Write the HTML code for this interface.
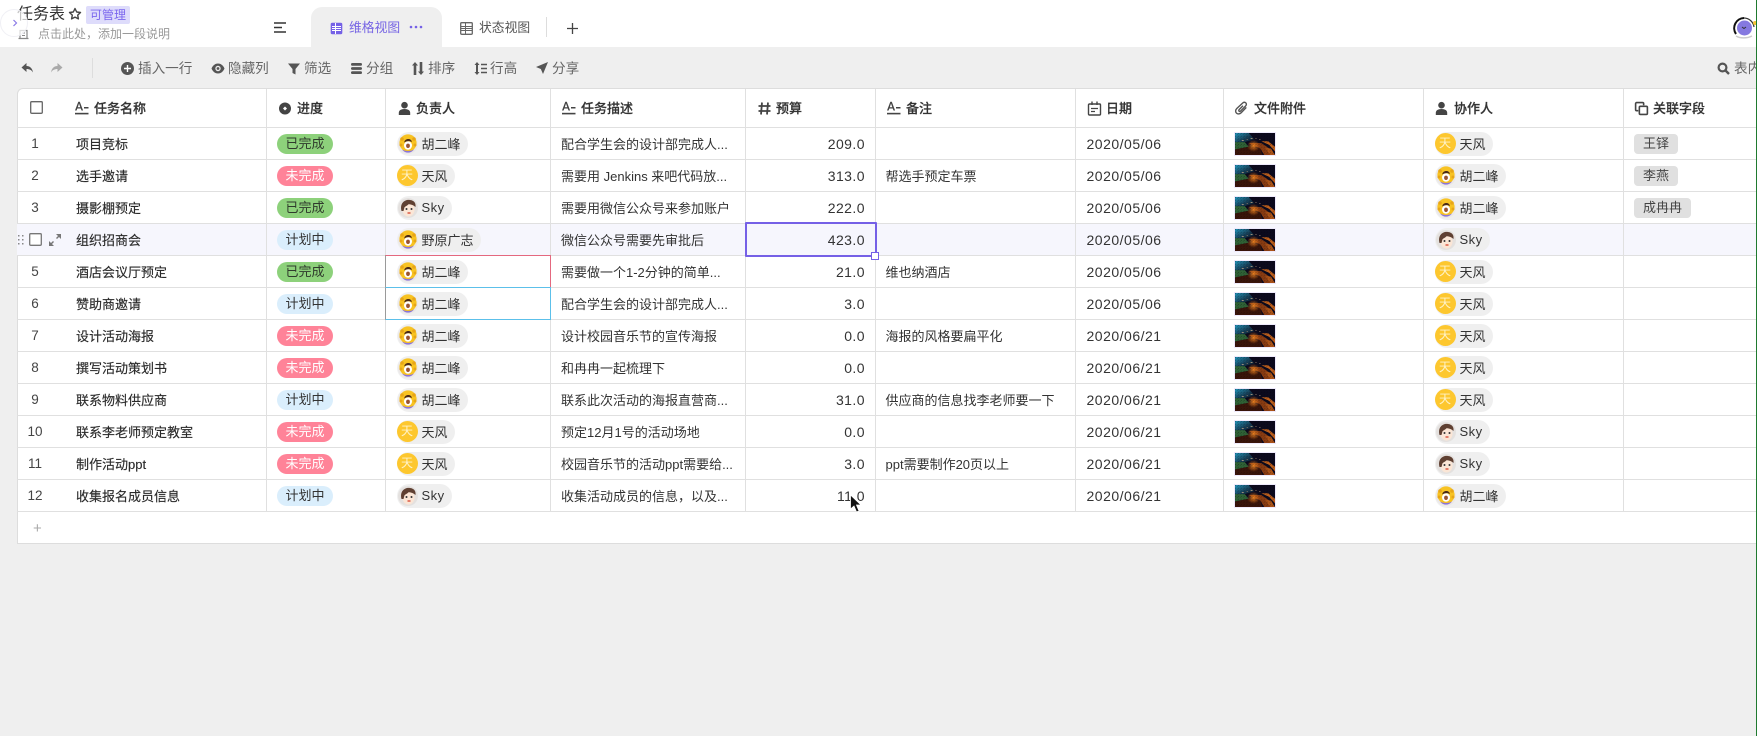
<!DOCTYPE html>
<html lang="zh"><head><meta charset="utf-8"><title>任务表</title>
<style>
*{box-sizing:border-box}
html,body{margin:0;padding:0}
body{width:1757px;height:736px;overflow:hidden;position:relative;background:#efefef;color:#333;font-family:"Liberation Sans","Noto Sans CJK SC",sans-serif;font-size:13px}
.top{position:absolute;left:0;top:0;width:1757px;height:47px;background:#fff}
.abs{position:absolute;white-space:nowrap}
.tb{position:absolute;top:60px;line-height:18px;font-size:13.6px;color:#666;white-space:nowrap}
.ic{position:absolute;display:block}
.t{position:absolute;left:17px;top:88px;width:1740px;height:456px;background:#fff;border-left:1px solid #ddd;border-top:1px solid #ddd;border-bottom:1px solid #ddd;border-top-left-radius:6px}
.r{display:flex;height:32px;border-bottom:1px solid #e0e0e0;margin-left:-1px}
.r.h{height:39px;font-weight:500;color:#333}
.r.hov{background:#f6f6fd}
.c{position:relative;height:100%;border-right:1px solid #e0e0e0;display:flex;align-items:center;white-space:nowrap;flex:none}
.c1{width:250px}.c2{width:119px;padding-left:10px}.c3{width:165px;padding-left:10.5px}.c4{width:195px;padding-left:10px;color:#333}
.c5{width:130px;padding-right:10px;justify-content:flex-end;font-size:14px;letter-spacing:.45px}.c6{width:200px;padding-left:9.500px}.c7{width:148px;padding-left:10.5px;font-size:14px;letter-spacing:.5px}
.c8{width:200px;padding-left:10px}.c9{width:200px;padding-left:10.5px}.c10{width:133px;border-right:0;padding-left:10px}
.n{position:absolute;left:0;width:36px;text-align:center;font-size:13.5px;color:#444}
.nm{position:absolute;left:59px;color:#2a2a2a;-webkit-text-stroke:.15px #2a2a2a}
.p{display:inline-block;width:56px;height:20px;line-height:20px;border-radius:10px;text-align:center;font-size:13px}
.g{background:#8dd17b;color:#2f3a2c}.k{background:#ff8398;color:#fff}.b{background:#daeefc;color:#333}
.u{display:flex;align-items:center;height:24px;border-radius:12px;background:#efefef;padding:0 7.5px 0 1px;font-size:13px;color:#333;letter-spacing:0}
.u svg{width:20px;height:20px;margin-right:4px;flex:none}
.u.y{padding-left:0}
.u .ya{width:21px;height:21px;border-radius:50%;background:#fdc72e;color:#fff3c8;text-align:center;line-height:21px;font-size:12px;margin:0 4px 0 0;flex:none}
.th{display:block;width:42px;height:24px;border:1px solid #eeeafc}
.tg{display:inline-block;height:20px;line-height:20px;border-radius:4px;background:#e0e0e0;padding:0 9px;font-size:13px;color:#444}
.hd svg{position:absolute;top:12px;width:15px;height:15px;color:#444}
.hd span{position:absolute;top:11px;line-height:18px;-webkit-text-stroke:.2px #333}
</style></head><body>
<svg width="0" height="0" style="position:absolute">
<defs>
<linearGradient id="gr1" x1="0" y1="0" x2="1" y2="1"><stop offset="0" stop-color="#2296bb"/><stop offset=".5" stop-color="#174058"/><stop offset="1" stop-color="#0a0818"/></linearGradient>
<radialGradient id="gr2" cx=".5" cy=".5" r=".5"><stop offset="0" stop-color="#f08420"/><stop offset="1" stop-color="#e8781c" stop-opacity="0"/></radialGradient>
<pattern id="spk" width="3" height="3" patternUnits="userSpaceOnUse"><rect width="1" height="1" fill="#000" fill-opacity=".3"/><rect x="2" y="1" width="1" height="1" fill="#000" fill-opacity=".2"/></pattern>
<symbol id="thumb" viewBox="0 0 41 24" preserveAspectRatio="none">
<rect width="41" height="24" fill="#0c0a1e"/>
<path d="M0 0H14L20 7 6 11 0 13Z" fill="url(#gr1)"/>
<path d="M0 10L10 10 14 15 0 18Z" fill="#2f6236"/>
<path d="M0 18L14 15 26 17 28 24H0Z" fill="#3a150a"/>
<path d="M14 11L27 11 34 16 39 24H30L26 17Z" fill="#8a3c12"/>
<path d="M27 9L35 13 41 20V15L34 9Z" fill="#bd5f1c"/>
<path d="M31 16L36 24H41L37 17Z" fill="#ad5418"/>
<circle cx="19" cy="14" r="6.500" fill="url(#gr2)"/>
<path d="M7 8h2M12 7h1M16 6h2M21 6h1M25 7h1" stroke="#c8aa88" stroke-width=".8"/>
<rect width="41" height="24" fill="url(#spk)"/>
</symbol>
<symbol id="sun" viewBox="0 0 20 20">
<circle cx="10" cy="10" r="10" fill="#ebe8e8"/>
<circle cx="10" cy="9" r="8.600" fill="#f8c322"/>
<circle cx="4" cy="5" r="1.800" fill="#e8a616"/><circle cx="16" cy="5" r="1.800" fill="#e8a616"/><circle cx="3" cy="11" r="1.500" fill="#e8a616"/><circle cx="17" cy="11" r="1.500" fill="#e8a616"/>
<ellipse cx="10" cy="11.500" rx="4" ry="4.200" fill="#fff"/>
<ellipse cx="10" cy="11.800" rx="1.900" ry="2.200" fill="#9a5430"/>
<path d="M6.200 8.500c.3-4 6.800-5 7.800-.5-2.800-1.200-5-1.200-7.800.5Z" fill="#4a2a18"/>
<path d="M4 15.500c3 4.200 9 4.200 12 0-3 2-9 2-12 0Z" fill="#8b74d8"/>
</symbol>
<symbol id="sky" viewBox="0 0 20 20">
<circle cx="10" cy="10" r="10" fill="#e4e1df"/>
<ellipse cx="10.500" cy="11.500" rx="6" ry="7" fill="#fbe6d6"/>
<path d="M3.500 13C1.500 5 7 1.200 12 2c4.500.5 6 3.500 5.500 7-2-2-5-2.800-7-2.800-1 1.300-3 2-4 3L5.500 13Z" fill="#5f4032"/>
<circle cx="8.500" cy="11" r="1" fill="#333"/><circle cx="13.500" cy="11" r="1" fill="#333"/>
<path d="M9.500 15h3" stroke="#d8503c" stroke-width="1.400"/>
</symbol>
<symbol id="aicon" viewBox="0 0 15 15"><path d="M1 9.500L4.300.8h1.500l3.300 8.700H7.500L6.800 7.500H3.300L2.600 9.500ZM3.800 6.200h2.500L5 2.500Z" fill="currentColor"/><rect x="10" y="6" width="4.500" height="1.500" fill="currentColor"/><rect x="1" y="11.800" width="13.500" height="1.600" fill="currentColor"/></symbol>
<symbol id="person" viewBox="0 0 15 15"><circle cx="7.500" cy="4.200" r="3.300" fill="currentColor"/><path d="M1.800 14v-2.200c0-2.400 2.200-3.800 5.700-3.800s5.700 1.400 5.700 3.800V14Z" fill="currentColor"/></symbol>
</defs></svg>

<div class="top"></div>
<div class="abs" style="left:17px;top:4px;font-size:16px;line-height:22px;color:#333">任务表</div>
<svg class="ic" style="left:68px;top:7px" width="14" height="14" viewBox="0 0 14 14"><path d="M7 1.500l1.700 3.500 3.800.5-2.800 2.600.7 3.800L7 10.100l-3.400 1.800.7-3.800-2.800-2.600 3.800-.5Z" fill="none" stroke="#444" stroke-width="1.400" stroke-linejoin="round"/></svg>
<div class="abs" style="left:86px;top:6px;width:44px;height:18px;background:#dedcfb;border-radius:2px;color:#7b67ee;font-size:12px;line-height:18px;text-align:center">可管理</div>
<svg class="ic" style="left:17px;top:28px" width="13" height="13" viewBox="0 0 13 13"><path d="M3 2.500h7v8H3ZM1.500 10.500h10" fill="none" stroke="#888" stroke-width="1.200"/><path d="M5 5h3M5 7.500h3" stroke="#888"/></svg>
<div class="abs" style="left:38px;top:26px;font-size:12px;line-height:17px;color:#999">点击此处，添加一段说明</div>
<svg class="ic" style="left:0;top:9px" width="30" height="29" viewBox="0 0 30 29"><circle cx="14" cy="14" r="13.500" fill="#fff" fill-opacity=".7" stroke="#f0f0f5"/><path d="M13.500 11l3 3-3 3" fill="none" stroke="#8a7ae6" stroke-width="1.200"/></svg>

<svg class="ic" style="left:274px;top:22px" width="13" height="12" viewBox="0 0 13 12"><path d="M0 1h12M0 5.500h8M0 10h12" stroke="#333" stroke-width="1.600"/></svg>
<div class="abs" style="left:311px;top:7px;width:131px;height:40px;background:#efefef;border-radius:11px 11px 0 0"></div>
<svg class="ic" style="left:330px;top:22px" width="13" height="13" viewBox="0 0 13 13"><rect x=".7" y=".7" width="11.600" height="11.600" rx="1.500" fill="#7561e6"/><path d="M2 4.500h9M2 6.500h9M2 8.500h9" stroke="#fff" stroke-width="1"/><path d="M5.500 1v11" stroke="#fff"/></svg>
<div class="abs" style="left:349px;top:19px;font-size:12.800px;line-height:18px;color:#7664e4">维格视图</div>
<svg class="ic" style="left:409px;top:25px" width="14" height="4" viewBox="0 0 14 4"><circle cx="2" cy="2" r="1.300" fill="#7561e6"/><circle cx="7" cy="2" r="1.300" fill="#7561e6"/><circle cx="12" cy="2" r="1.300" fill="#7561e6"/></svg>
<svg class="ic" style="left:460px;top:22px" width="13" height="13" viewBox="0 0 13 13"><rect x=".7" y=".7" width="11.600" height="11.600" rx="1" fill="none" stroke="#666" stroke-width="1.300"/><path d="M1 4.500h11M1 6.500h11M1 8.500h11M5.500 1v11" stroke="#666"/></svg>
<div class="abs" style="left:479px;top:19px;font-size:12.800px;line-height:18px;color:#555">状态视图</div>
<div class="abs" style="left:546px;top:17px;width:1px;height:20px;background:#ddd"></div>
<svg class="ic" style="left:567px;top:23px" width="11" height="11" viewBox="0 0 11 11"><path d="M5.500 0v11M0 5.500h11" stroke="#444" stroke-width="1.300"/></svg>

<svg class="ic" style="left:1733px;top:17px" width="23" height="23" viewBox="0 0 23 23"><path d="M11 1A10.200 10.200 0 0 0 3 17" fill="none" stroke="#111" stroke-width="2"/><path d="M11 1A10.200 10.200 0 0 1 21 10" fill="none" stroke="#333" stroke-width="1.200"/><circle cx="11.500" cy="11" r="7.500" fill="#8579e0"/><path d="M9 10l2 1.500L13 10" stroke="#333" fill="none"/><path d="M3 19c4 2.500 11 2.500 16 0" stroke="#ccc" stroke-width="1.500" fill="none"/><circle cx="22" cy="6" r="2" fill="#f4c33a"/></svg>

<!-- toolbar -->
<svg class="ic" style="left:21px;top:62px" width="13" height="12" viewBox="0 0 13 12"><path d="M5.500 1L.5 5.500l5 4.500V7c3 0 5 1 6.500 3.500C11.500 7 9.500 4 5.500 4Z" fill="#555"/></svg>
<svg class="ic" style="left:50px;top:62px" width="13" height="12" viewBox="0 0 13 12"><path d="M7.500 1l5 4.500-5 4.500V7c-3 0-5 1-6.500 3.500C1.500 7 3.500 4 7.500 4Z" fill="#aaa"/></svg>
<div class="abs" style="left:92px;top:58px;width:1px;height:20px;background:#ddd"></div>
<svg class="ic" style="left:121px;top:62px" width="13" height="13" viewBox="0 0 13 13"><circle cx="6.500" cy="6.500" r="6.500" fill="#555"/><path d="M6.500 3v7M3 6.500h7" stroke="#fff" stroke-width="1.400"/></svg><div class="tb" style="left:138px">插入一行</div>
<svg class="ic" style="left:211px;top:63px" width="14" height="11" viewBox="0 0 14 11"><path d="M.5 5.500C2 2 4.500.5 7 .5s5 1.500 6.500 5C12 9 9.500 10.500 7 10.500S2 9 .5 5.500Z" fill="#555"/><circle cx="7" cy="5.500" r="2.700" fill="#eee"/><circle cx="7" cy="5.500" r="1.400" fill="#555"/></svg><div class="tb" style="left:228px">隐藏列</div>
<svg class="ic" style="left:288px;top:63px" width="12" height="12" viewBox="0 0 12 12"><path d="M0 .5h12L7.500 6v5.500L4.500 10V6Z" fill="#555"/></svg><div class="tb" style="left:304px">筛选</div>
<svg class="ic" style="left:351px;top:63px" width="11" height="11" viewBox="0 0 11 11"><rect y="0" width="11" height="2.800" rx="1.400" fill="#555"/><rect y="4.100" width="11" height="2.800" rx="1.400" fill="#555"/><rect y="8.200" width="11" height="2.800" rx="1.400" fill="#555"/></svg><div class="tb" style="left:366px">分组</div>
<svg class="ic" style="left:411px;top:62px" width="14" height="13" viewBox="0 0 14 13"><path d="M4 0L7 3.500H5.300V13H2.700V3.500H1Z" fill="#555"/><path d="M10 13L7 9.500h1.700V0h2.600v9.500H13Z" fill="#555"/></svg><div class="tb" style="left:428px">排序</div>
<svg class="ic" style="left:474px;top:62px" width="13" height="13" viewBox="0 0 13 13"><path d="M3 0l2.500 3H4v7h1.500L3 13 .5 10H2V3H.5Z" fill="#555"/><path d="M7 2.500h6M7 6.500h6M7 10.500h6" stroke="#555" stroke-width="1.500"/></svg><div class="tb" style="left:490px">行高</div>
<svg class="ic" style="left:536px;top:62px" width="12" height="12" viewBox="0 0 12 12"><path d="M12 0L0 5l4.800 2L7 12Z" fill="#555"/></svg><div class="tb" style="left:552px">分享</div>
<svg class="ic" style="left:1717px;top:62px" width="13" height="13" viewBox="0 0 13 13"><circle cx="5.500" cy="5.500" r="3.900" fill="none" stroke="#555" stroke-width="2.200"/><path d="M8.500 8.500L12 12" stroke="#555" stroke-width="2.400"/></svg><div class="tb" style="left:1734px">表内</div>

<!-- table -->
<div class="t">
<div class="r h">
<div class="c c1 hd"><svg class="ic" style="left:13px;top:12px;width:13px;height:13px" viewBox="0 0 13 13"><rect x=".7" y=".7" width="11.600" height="11.600" rx="1" fill="none" stroke="#666" stroke-width="1.300"/></svg><svg style="left:57px"><use href="#aicon"/></svg><span style="left:77px">任务名称</span></div>
<div class="c c2 hd"><svg style="left:11px" viewBox="0 0 15 15"><circle cx="7" cy="7.500" r="6" fill="#444"/><path d="M7 5.500l2 2-2 2-2-2Z" fill="#fff"/></svg><span style="left:30px">进度</span></div>
<div class="c c3 hd"><svg style="left:11px"><use href="#person"/></svg><span style="left:30px">负责人</span></div>
<div class="c c4 hd"><svg style="left:10px"><use href="#aicon"/></svg><span style="left:30px">任务描述</span></div>
<div class="c c5 hd" style="font-size:13px;letter-spacing:0"><svg style="left:11px" viewBox="0 0 15 15"><path d="M5 1.500L4 13.500M11 1.500L10 13.500M1.500 5h12M1.500 10h12" stroke="#444" stroke-width="1.800" fill="none"/></svg><span style="left:30px">预算</span></div>
<div class="c c6 hd"><svg style="left:10px"><use href="#aicon"/></svg><span style="left:30px">备注</span></div>
<div class="c c7 hd" style="font-size:13px;letter-spacing:0"><svg style="left:11px" viewBox="0 0 15 15"><rect x="1.500" y="3" width="12" height="11" rx="1" fill="none" stroke="#444" stroke-width="1.400"/><path d="M5 .5v3.500M10 .5v3.500" stroke="#444" stroke-width="1.400"/><path d="M4 7.500h7M4 10.500h4" stroke="#444" stroke-width="1.300"/></svg><span style="left:30px">日期</span></div>
<div class="c c8 hd"><svg style="left:10px" viewBox="0 0 14 14"><path d="M11.500 6l-4.800 5c-1.400 1.400-3.300 1.400-4.400.3-1.100-1.100-1-3 .3-4.300L8 2c1-1 2.200-1 3-.2.800.8.700 2-.2 2.900L6.200 9.300c-.5.500-1.100.5-1.500.1-.4-.4-.3-1 .2-1.500l3.500-3.500" fill="none" stroke="#555" stroke-width="1.300"/></svg><span style="left:30px">文件附件</span></div>
<div class="c c9 hd"><svg style="left:10px"><use href="#person"/></svg><span style="left:30px">协作人</span></div>
<div class="c c10 hd"><svg style="left:10px" viewBox="0 0 14 14"><path d="M9 4V2.500a1 1 0 0 0-1-1H2.500a1 1 0 0 0-1 1V8a1 1 0 0 0 1 1H4" fill="none" stroke="#444" stroke-width="1.500"/><rect x="5" y="5" width="7.500" height="7.500" rx="1" fill="none" stroke="#444" stroke-width="1.500"/></svg><span style="left:29px">关联字段</span></div>
</div>

<div class="r"><div class="c c1"><span class="n">1</span><span class="nm">项目竞标</span></div><div class="c c2"><span class="p g">已完成</span></div><div class="c c3"><span class="u"><svg><use href="#sun"/></svg>胡二峰</span></div><div class="c c4">配合学生会的设计部完成人...</div><div class="c c5">209.0</div><div class="c c6"></div><div class="c c7">2020/05/06</div><div class="c c8"><svg class="th"><use href="#thumb"/></svg></div><div class="c c9"><span class="u y"><span class="ya">天</span>天风</span></div><div class="c c10"><span class="tg">王铎</span></div></div>

<div class="r"><div class="c c1"><span class="n">2</span><span class="nm">选手邀请</span></div><div class="c c2"><span class="p k">未完成</span></div><div class="c c3"><span class="u y"><span class="ya">天</span>天风</span></div><div class="c c4">需要用 Jenkins 来吧代码放...</div><div class="c c5">313.0</div><div class="c c6">帮选手预定车票</div><div class="c c7">2020/05/06</div><div class="c c8"><svg class="th"><use href="#thumb"/></svg></div><div class="c c9"><span class="u"><svg><use href="#sun"/></svg>胡二峰</span></div><div class="c c10"><span class="tg">李燕</span></div></div>

<div class="r"><div class="c c1"><span class="n">3</span><span class="nm">摄影棚预定</span></div><div class="c c2"><span class="p g">已完成</span></div><div class="c c3"><span class="u"><svg><use href="#sky"/></svg><span style="letter-spacing:.5px">Sky</span></span></div><div class="c c4">需要用微信公众号来参加账户</div><div class="c c5">222.0</div><div class="c c6"></div><div class="c c7">2020/05/06</div><div class="c c8"><svg class="th"><use href="#thumb"/></svg></div><div class="c c9"><span class="u"><svg><use href="#sun"/></svg>胡二峰</span></div><div class="c c10"><span class="tg">成冉冉</span></div></div>

<div class="r hov"><div class="c c1"><svg class="ic" style="left:1px;top:10px" width="7" height="11" viewBox="0 0 7 11"><g fill="#888"><rect x="0" y="1" width="1.500" height="1.500"/><rect x="4" y="1" width="1.500" height="1.500"/><rect x="0" y="5" width="1.500" height="1.500"/><rect x="4" y="5" width="1.500" height="1.500"/><rect x="0" y="9" width="1.500" height="1.500"/><rect x="4" y="9" width="1.500" height="1.500"/></g></svg><svg class="ic" style="left:12px;top:9px" width="13" height="13" viewBox="0 0 13 13"><rect x=".7" y=".7" width="11.600" height="11.600" rx="1" fill="#fff" stroke="#777" stroke-width="1.300"/></svg><svg class="ic" style="left:32px;top:10px" width="12" height="12" viewBox="0 0 12 12"><path d="M7 0h5v5L10 3 8 5 7 4l2-2ZM5 12H0V7l2 2 2-2 1 1-2 2Z" fill="#777"/></svg><span class="nm">组织招商会</span></div><div class="c c2"><span class="p b">计划中</span></div><div class="c c3"><span class="u"><svg><use href="#sun"/></svg>野原广志</span></div><div class="c c4">微信公众号需要先审批后</div><div class="c c5">423.0</div><div class="c c6"></div><div class="c c7">2020/05/06</div><div class="c c8"><svg class="th"><use href="#thumb"/></svg></div><div class="c c9"><span class="u"><svg><use href="#sky"/></svg><span style="letter-spacing:.5px">Sky</span></span></div><div class="c c10"></div></div>

<div class="r"><div class="c c1"><span class="n">5</span><span class="nm">酒店会议厅预定</span></div><div class="c c2"><span class="p g">已完成</span></div><div class="c c3"><span class="u"><svg><use href="#sun"/></svg>胡二峰</span></div><div class="c c4">需要做一个1-2分钟的简单...</div><div class="c c5">21.0</div><div class="c c6">维也纳酒店</div><div class="c c7">2020/05/06</div><div class="c c8"><svg class="th"><use href="#thumb"/></svg></div><div class="c c9"><span class="u y"><span class="ya">天</span>天风</span></div><div class="c c10"></div></div>

<div class="r"><div class="c c1"><span class="n">6</span><span class="nm">赞助商邀请</span></div><div class="c c2"><span class="p b">计划中</span></div><div class="c c3"><span class="u"><svg><use href="#sun"/></svg>胡二峰</span></div><div class="c c4">配合学生会的设计部完成人...</div><div class="c c5">3.0</div><div class="c c6"></div><div class="c c7">2020/05/06</div><div class="c c8"><svg class="th"><use href="#thumb"/></svg></div><div class="c c9"><span class="u y"><span class="ya">天</span>天风</span></div><div class="c c10"></div></div>

<div class="r"><div class="c c1"><span class="n">7</span><span class="nm">设计活动海报</span></div><div class="c c2"><span class="p k">未完成</span></div><div class="c c3"><span class="u"><svg><use href="#sun"/></svg>胡二峰</span></div><div class="c c4">设计校园音乐节的宣传海报</div><div class="c c5">0.0</div><div class="c c6">海报的风格要扁平化</div><div class="c c7">2020/06/21</div><div class="c c8"><svg class="th"><use href="#thumb"/></svg></div><div class="c c9"><span class="u y"><span class="ya">天</span>天风</span></div><div class="c c10"></div></div>

<div class="r"><div class="c c1"><span class="n">8</span><span class="nm">撰写活动策划书</span></div><div class="c c2"><span class="p k">未完成</span></div><div class="c c3"><span class="u"><svg><use href="#sun"/></svg>胡二峰</span></div><div class="c c4">和冉冉一起梳理下</div><div class="c c5">0.0</div><div class="c c6"></div><div class="c c7">2020/06/21</div><div class="c c8"><svg class="th"><use href="#thumb"/></svg></div><div class="c c9"><span class="u y"><span class="ya">天</span>天风</span></div><div class="c c10"></div></div>

<div class="r"><div class="c c1"><span class="n">9</span><span class="nm">联系物料供应商</span></div><div class="c c2"><span class="p b">计划中</span></div><div class="c c3"><span class="u"><svg><use href="#sun"/></svg>胡二峰</span></div><div class="c c4">联系此次活动的海报直营商...</div><div class="c c5">31.0</div><div class="c c6">供应商的信息找李老师要一下</div><div class="c c7">2020/06/21</div><div class="c c8"><svg class="th"><use href="#thumb"/></svg></div><div class="c c9"><span class="u y"><span class="ya">天</span>天风</span></div><div class="c c10"></div></div>

<div class="r"><div class="c c1"><span class="n">10</span><span class="nm">联系李老师预定教室</span></div><div class="c c2"><span class="p k">未完成</span></div><div class="c c3"><span class="u y"><span class="ya">天</span>天风</span></div><div class="c c4">预定12月1号的活动场地</div><div class="c c5">0.0</div><div class="c c6"></div><div class="c c7">2020/06/21</div><div class="c c8"><svg class="th"><use href="#thumb"/></svg></div><div class="c c9"><span class="u"><svg><use href="#sky"/></svg><span style="letter-spacing:.5px">Sky</span></span></div><div class="c c10"></div></div>

<div class="r"><div class="c c1"><span class="n">11</span><span class="nm">制作活动ppt</span></div><div class="c c2"><span class="p k">未完成</span></div><div class="c c3"><span class="u y"><span class="ya">天</span>天风</span></div><div class="c c4">校园音乐节的活动ppt需要给...</div><div class="c c5">3.0</div><div class="c c6">ppt需要制作20页以上</div><div class="c c7">2020/06/21</div><div class="c c8"><svg class="th"><use href="#thumb"/></svg></div><div class="c c9"><span class="u"><svg><use href="#sky"/></svg><span style="letter-spacing:.5px">Sky</span></span></div><div class="c c10"></div></div>

<div class="r"><div class="c c1"><span class="n">12</span><span class="nm">收集报名成员信息</span></div><div class="c c2"><span class="p b">计划中</span></div><div class="c c3"><span class="u"><svg><use href="#sky"/></svg><span style="letter-spacing:.5px">Sky</span></span></div><div class="c c4">收集活动成员的信息，以及...</div><div class="c c5">11.0</div><div class="c c6"></div><div class="c c7">2020/06/21</div><div class="c c8"><svg class="th"><use href="#thumb"/></svg></div><div class="c c9"><span class="u"><svg><use href="#sun"/></svg>胡二峰</span></div><div class="c c10"></div></div>
</div>
<div class="abs" style="left:33px;top:520px;color:#aaa;font-size:15px;line-height:18px">+</div>

<!-- selection overlays -->
<div class="abs" style="left:745px;top:222px;width:132px;height:35px;border:2px solid #7560e6;border-radius:1px"></div>
<div class="abs" style="left:871px;top:252px;width:8px;height:8px;background:#fff;border:1px solid #7560e6"></div>
<div class="abs" style="left:385px;top:255px;width:166px;height:33px;border:1px solid #e4687f;border-left-color:#9a9a9a"></div>
<div class="abs" style="left:385px;top:287px;width:166px;height:33px;border:1px solid #5cc0ea;border-left-color:#9a9a9a"></div>

<svg class="ic" style="left:849px;top:494px" width="14" height="20" viewBox="0 0 14 20"><path d="M1.500 1v14l3.500-3 2.500 6 2.500-1-2.500-6h4.500Z" fill="#111" stroke="#fff" stroke-width=".8"/></svg>
<div class="abs" style="left:1756px;top:0;width:1px;height:736px;background:#1f7a2f"></div>
</body></html>
